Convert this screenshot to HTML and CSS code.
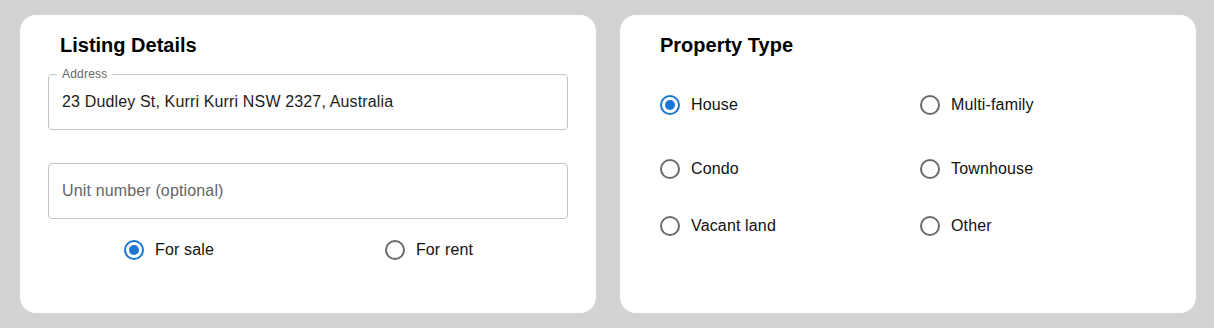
FILE: index.html
```html
<!DOCTYPE html>
<html lang="en">
<head>
<meta charset="utf-8">
<title>Listing</title>
<link rel="stylesheet" href="styles.css">
</head>
<body>
<main class="page">
  <section class="card card-listing">
    <h2 class="card-title card-title-indent">Listing Details</h2>
    <div class="field field-address">
      <span class="field-label">Address</span>
      <span class="field-value">23 Dudley St, Kurri Kurri NSW 2327, Australia</span>
    </div>
    <div class="field field-unit">
      <span class="field-placeholder">Unit number (optional)</span>
    </div>
    <div class="listing-radios">
      <label class="radio-item radio-item-centered">
        <svg class="radio-icon radio-checked" viewBox="2 2 20 20" width="20" height="20"><circle cx="12" cy="12" r="9" fill="none" stroke="currentColor" stroke-width="2"/><circle cx="12" cy="12" r="5" fill="currentColor"/></svg>
        <span class="radio-text">For sale</span>
      </label>
      <label class="radio-item radio-item-centered">
        <svg class="radio-icon radio-unchecked" viewBox="2 2 20 20" width="20" height="20"><circle cx="12" cy="12" r="9" fill="none" stroke="currentColor" stroke-width="2"/></svg>
        <span class="radio-text">For rent</span>
      </label>
    </div>
  </section>

  <section class="card card-type">
    <h2 class="card-title">Property Type</h2>
    <div class="type-grid">
      <div class="type-row type-row-1">
        <label class="radio-item">
          <svg class="radio-icon radio-checked" viewBox="2 2 20 20" width="20" height="20"><circle cx="12" cy="12" r="9" fill="none" stroke="currentColor" stroke-width="2"/><circle cx="12" cy="12" r="5" fill="currentColor"/></svg>
          <span class="radio-text">House</span>
        </label>
        <label class="radio-item">
          <svg class="radio-icon radio-unchecked" viewBox="2 2 20 20" width="20" height="20"><circle cx="12" cy="12" r="9" fill="none" stroke="currentColor" stroke-width="2"/></svg>
          <span class="radio-text">Multi-family</span>
        </label>
      </div>
      <div class="type-row type-row-2">
        <label class="radio-item">
          <svg class="radio-icon radio-unchecked" viewBox="2 2 20 20" width="20" height="20"><circle cx="12" cy="12" r="9" fill="none" stroke="currentColor" stroke-width="2"/></svg>
          <span class="radio-text">Condo</span>
        </label>
        <label class="radio-item">
          <svg class="radio-icon radio-unchecked" viewBox="2 2 20 20" width="20" height="20"><circle cx="12" cy="12" r="9" fill="none" stroke="currentColor" stroke-width="2"/></svg>
          <span class="radio-text">Townhouse</span>
        </label>
      </div>
      <div class="type-row type-row-3">
        <label class="radio-item">
          <svg class="radio-icon radio-unchecked" viewBox="2 2 20 20" width="20" height="20"><circle cx="12" cy="12" r="9" fill="none" stroke="currentColor" stroke-width="2"/></svg>
          <span class="radio-text">Vacant land</span>
        </label>
        <label class="radio-item">
          <svg class="radio-icon radio-unchecked" viewBox="2 2 20 20" width="20" height="20"><circle cx="12" cy="12" r="9" fill="none" stroke="currentColor" stroke-width="2"/></svg>
          <span class="radio-text">Other</span>
        </label>
      </div>
    </div>
  </section>
</main>
</body>
</html>
```

FILE: styles.css
```css
* {
  box-sizing: border-box;
}

html, body {
  margin: 0;
  padding: 0;
}

body {
  background: #d3d3d3;
  font-family: "Liberation Sans", Arial, sans-serif;
  color: #111;
}

.page {
  display: grid;
  grid-template-columns: 576px 576px;
  column-gap: 24px;
  padding: 15px 20px;
  align-items: start;
}

.card {
  background: #ffffff;
  border-radius: 16px;
  height: 298px;
  display: flex;
  flex-direction: column;
}

.card-listing {
  padding: 18px 28px 0 28px;
}

.card-type {
  padding: 18px 40px 0 40px;
}

.card-title {
  margin: 0;
  font-size: 20px;
  line-height: 24px;
  font-weight: 700;
  color: #000;
}

.card-title-indent {
  padding-left: 12px;
}

/* text fields */
.field {
  position: relative;
  height: 56px;
  border: 1px solid #c4c4c4;
  border-radius: 4px;
  display: flex;
  align-items: center;
  padding: 0 13px;
}

.field-address {
  margin-top: 17px;
}

.field-unit {
  margin-top: 33px;
}

.field-label {
  position: absolute;
  left: 8px;
  top: -7px;
  padding: 0 5px;
  background: #ffffff;
  font-size: 12px;
  line-height: 12px;
  letter-spacing: 0.2px;
  color: #666666;
}

.field-value {
  font-size: 16px;
  line-height: 23px;
  letter-spacing: 0.15px;
  color: #1c1c1c;
  margin-top: -2px;
}

.field-placeholder {
  font-size: 16px;
  line-height: 23px;
  letter-spacing: 0.15px;
  color: #666666;
  margin-top: -2px;
}

/* radios */
.radio-item {
  display: flex;
  align-items: center;
  height: 38px;
  gap: 11px;
  cursor: pointer;
}

.radio-icon {
  display: block;
  flex: none;
}

.radio-checked {
  color: #1976d2;
}

.radio-unchecked {
  color: #6b6b6b;
}

.radio-text {
  font-size: 16px;
  line-height: 24px;
  letter-spacing: 0.15px;
  color: #111;
}

.listing-radios {
  margin-top: 12px;
  display: grid;
  grid-template-columns: 1fr 1fr;
  justify-items: center;
}

.radio-item-centered {
  padding-right: 18px;
}

.type-grid {
  display: flex;
  flex-direction: column;
}

.type-row {
  display: grid;
  grid-template-columns: 260px 260px;
}

.type-row-1 {
  margin-top: 29px;
}

.type-row-2 {
  margin-top: 26px;
}

.type-row-3 {
  margin-top: 19px;
}
```
